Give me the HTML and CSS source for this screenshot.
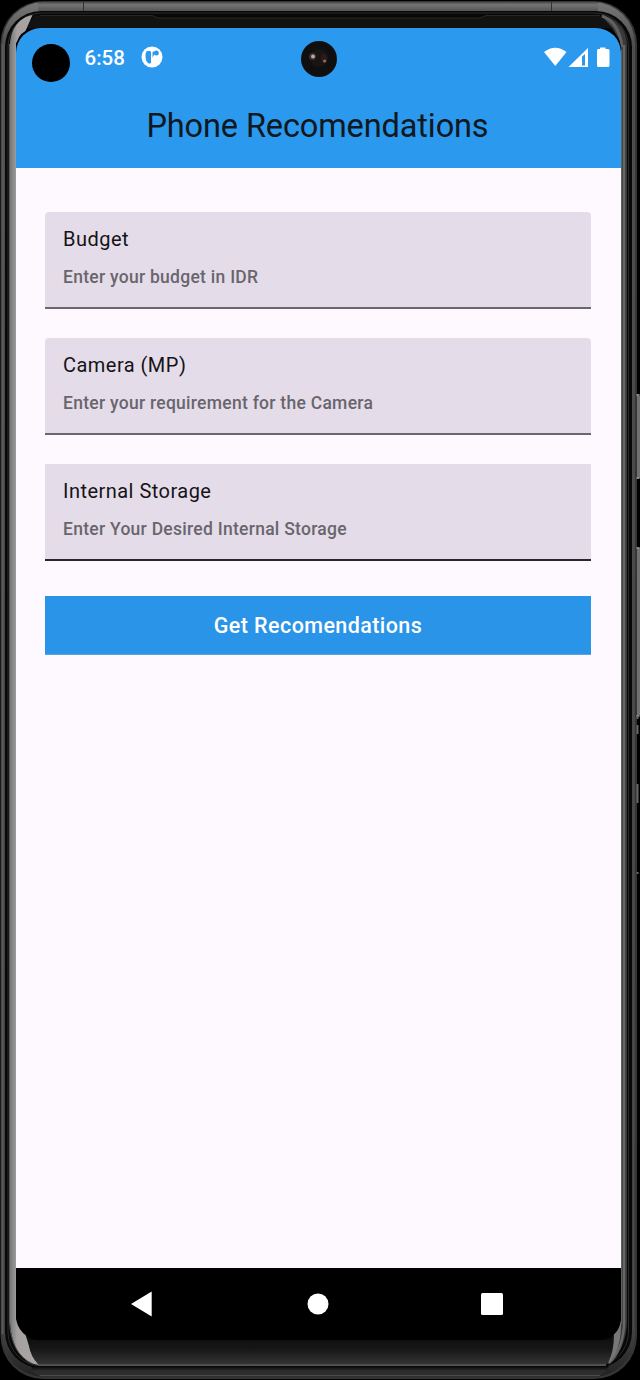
FILE: index.html
```html
<!DOCTYPE html>
<html lang="en">
<head>
<meta charset="utf-8">
<title>Phone Recomendations</title>
<link rel="stylesheet" href="styles.css">
</head>
<body>
<div class="device">
  <svg class="shell" width="640" height="1380" viewBox="0 0 640 1380" aria-hidden="true">
    <defs>
      <linearGradient id="rim" x1="0" y1="0" x2="0" y2="1">
        <stop offset="0" stop-color="#777"/><stop offset="0.03" stop-color="#505050"/><stop offset="0.97" stop-color="#404040"/><stop offset="1" stop-color="#222"/>
      </linearGradient>
      <linearGradient id="top" x1="0" y1="0" x2="0" y2="1">
        <stop offset="0" stop-color="#4a4a4a"/><stop offset="0.3" stop-color="#747474"/><stop offset="1" stop-color="#555"/>
      </linearGradient>
      <linearGradient id="chin" x1="0" y1="0" x2="0" y2="1">
        <stop offset="0" stop-color="#0c0c0c"/><stop offset="0.5" stop-color="#161616"/><stop offset="1" stop-color="#333"/>
      </linearGradient>
      <linearGradient id="left" x1="0" y1="0" x2="1" y2="0">
        <stop offset="0" stop-color="#777"/><stop offset="0.25" stop-color="#a5a1a1"/><stop offset="1" stop-color="#aaa6a6"/>
      </linearGradient>
      <linearGradient id="base" x1="0" y1="0" x2="0" y2="1">
        <stop offset="0" stop-color="#050505"/><stop offset="0.4" stop-color="#2c2c2c"/><stop offset="1" stop-color="#303030"/>
      </linearGradient>
    </defs>
    <rect width="640" height="1380" fill="#000"/>
    <rect x="0.500" y="1" width="636.500" height="1378" rx="43" fill="#353535"/>
    <rect x="2" y="2" width="633" height="1375" rx="42" fill="url(#rim)"/>
    <rect x="38" y="2" width="560" height="9" fill="url(#top)"/>
    <path d="M83.500 2v9M551.500 2v9" stroke="#333"/>
    <rect x="5" y="11" width="627" height="1357" rx="36" fill="#080808"/>
    <rect x="8" y="13" width="620.500" height="1353" rx="34" fill="none" stroke="#2b2b2b"/>
    <path d="M34 15.500H152L158 18H480L486 15.500H604L612 28H26z" fill="#121212"/>
    <path d="M40 15.500H152L158 18H480L486 15.500H600" fill="none" stroke="#272727"/>
    <path d="M32.500 15C20 17 11 28 10 44V1323C12 1349 23 1363 39 1365Q31 1356 29 1345 27 1332 22 1328L16 1318V43L25 32z" fill="url(#left)"/>
    <path d="M9.500 44V1322Q11 1354 33 1364" fill="none" stroke="#555"/>
    <path d="M601 15C616 18 627 29 627 45V1322C626 1349 612 1363 608 1364L614 1342 621 1316V44L613 29z" fill="#383a39"/>
    <path d="M621.500 50V1324" stroke="#606060"/>
    <path d="M624 45V1326Q622 1351 609 1363" fill="none" stroke="#666867" stroke-width="2.500"/>
    <path d="M602 16Q619 22 622 47" fill="none" stroke="#606060" stroke-width="3"/>
    <path d="M613 1332L621 1318Q622 1352 608 1363 614 1349 613 1332z" fill="#777"/>
    <path d="M25 1333L30 1340H610L614 1334Q614 1354 607 1364H38Q31 1357 29 1346z" fill="url(#chin)"/>
    <path d="M38 1365H606" stroke="#656565" stroke-width="1.300"/>
    <path d="M31 1366H609Q603 1378 591 1378H45Q34 1376 31 1366z" fill="url(#base)"/>
    <path d="M40 1375.500H600" stroke="#4b4b4b"/>
    <path d="M633.500 46V1330" stroke="#4b4b4b"/>
    <path d="M2.500 44V1334" stroke="#5b5b5b" stroke-width="2"/>
    <path d="M638.500 396V478M638.500 548V715" stroke="#707070" stroke-width="3"/>
    <path d="M636.500 395h3M636.500 478h3M636.500 548h3M636.500 716h3" stroke="#888" stroke-width="2"/>
    <path d="M637.500 716v3M637.500 725v9M637.500 784v19M637.500 872v2" stroke="#666" stroke-width="2"/>
    <path d="M16 50Q16 28 40 28H597Q621 28 621 50V1319Q619 1339 598 1340H40Q27 1339 23 1328L16 1319z" fill="#000"/>
  </svg>

  <main class="screen">
    <header class="appbar">
      <div class="status">
        <span class="cutout"></span>
        <span class="clock">6:58</span>
        <svg class="notice" width="22" height="22" viewBox="0 0 22 22"><circle cx="11" cy="11" r="10.500" fill="#fff"/><path d="M6 5H9.300Q10.300 5.500 10 8V17Q8 18.500 6 16Q4.500 14 4.500 10Q4.500 6 6 5zM12 5.500H13V9Q12 10 11.500 12V6.500z" fill="#2b99ee"/><circle cx="15.300" cy="7" r="2.500" fill="#2b99ee"/></svg>
        <svg class="lens" width="38" height="38" viewBox="0 0 38 38"><circle cx="19" cy="19" r="18" fill="#100f10"/><circle cx="19" cy="18" r="9" fill="#1a1415"/><circle cx="12.500" cy="16.500" r="3.500" fill="#3b3030"/><circle cx="13" cy="16.500" r="1.900" fill="#b9aaa5"/><ellipse cx="24" cy="18.500" rx="3" ry="4.500" fill="#2d1b1b"/><circle cx="24.700" cy="21" r="1.600" fill="#8f6b60"/></svg>
        <svg class="signals" width="67" height="22" viewBox="0 0 67 22"><path d="M0 5Q11.300-3.500 22.500 5L11.300 19z" fill="#fff"/><path fill-rule="evenodd" d="M24.500 20L44 1V20zM38 9.500V18.500H41V7z" fill="#fff"/><path d="M56 2V1Q56 .5 56.500 .5H61Q61.500 .5 61.500 1V2H64Q65.500 2 65.500 3.500V18.500Q65.500 20 64 20H54.500Q53 20 53 18.500V3.500Q53 2 54.500 2z" fill="#fff"/></svg>
      </div>
      <h1 class="title"><span>Phone Recomendations</span></h1>
    </header>
    <form class="form">
      <label class="field"><span class="name"><span>Budget</span></span><span class="hint"><span>Enter your budget in IDR</span></span></label>
      <label class="field"><span class="name"><span>Camera (MP)</span></span><span class="hint"><span>Enter your requirement for the Camera</span></span></label>
      <label class="field dark"><span class="name"><span>Internal Storage</span></span><span class="hint"><span>Enter Your Desired Internal Storage</span></span></label>
      <button class="submit" type="button"><span>Get Recomendations</span></button>
    </form>
    <nav class="navbar">
      <svg width="22" height="26" viewBox="0 0 22 26"><path d="M0 13L20.700 .6V25.400z" fill="#fff"/></svg>
      <svg width="22" height="22" viewBox="0 0 22 22"><circle cx="12" cy="11" r="10.500" fill="#fff"/></svg>
      <svg width="22" height="22" viewBox="0 0 22 22"><rect width="22" height="22" rx="1.500" fill="#fff"/></svg>
    </nav>
  </main>
</div>
</body>
</html>
```
FILE: styles.css
```css
* { box-sizing: border-box; }
body { margin: 0; background: #000; font-family: Roboto, "Liberation Sans", sans-serif; }
svg { display: block; flex: none; overflow: visible; }
.device { position: relative; width: 640px; height: 1380px; padding: 28px 19px 40px 16px; overflow: hidden; }
.shell { position: absolute; inset: 0; }
.screen { position: relative; height: 1312px; display: flex; flex-direction: column; overflow: hidden; }
.appbar { height: 139.500px; background: #2b99ee; border-radius: 25px 25px 0 0; }
.status { display: flex; height: 60px; padding: 0 10px 0 16px; align-items: flex-start; }
.cutout { width: 38px; height: 38px; margin-top: 16px; border-radius: 50%; background: #000; }
.clock { width: 71px; padding-left: 14.500px; margin-top: 18px; font-size: 20.500px; line-height: 24px; font-weight: 500; color: #fff; }
.notice { margin-top: 18px; }
.lens { margin: 12px 0 0 137px; }
.signals { margin: 19px 0 0 auto; }
.title { margin: 0; height: 76px; display: flex; align-items: center; justify-content: center; padding-right: 2px; font-size: 32.500px; font-weight: 400; line-height: 40px; color: #111820; white-space: nowrap; letter-spacing: -.12px; }
.form { flex: 1; background: #fef9fe; padding: 44.500px 30px 0 29px; }
.field { display: block; height: 97px; margin-bottom: 29px; padding: 16px 18px 0; background: #e4dde9; border-bottom: 2px solid #6b666f; border-radius: 4px 4px 0 0; }
.field.dark { border-bottom-color: #29272c; border-radius: 0; }
.name { display: block; height: 22px; font-size: 20px; line-height: 22px; color: #151317; letter-spacing: .47px; }
.hint { display: block; margin-top: 16px; font-size: 17.500px; line-height: 22px; font-weight: 500; color: #69656d; letter-spacing: .27px; white-space: nowrap; }
.submit { display: block; width: 100%; height: 59px; margin-top: 35px; padding: 1px 0 0; border: 0; border-bottom: 1px solid #5ba4df; background: #2a94e9; color: #fff; font: 500 21.500px/57px Roboto, sans-serif; letter-spacing: .42px; }
.navbar { height: 72px; display: flex; align-items: center; justify-content: space-between; padding: 0 118px 0 115px; background: #000; border-radius: 0 0 24px 24px; }
```
